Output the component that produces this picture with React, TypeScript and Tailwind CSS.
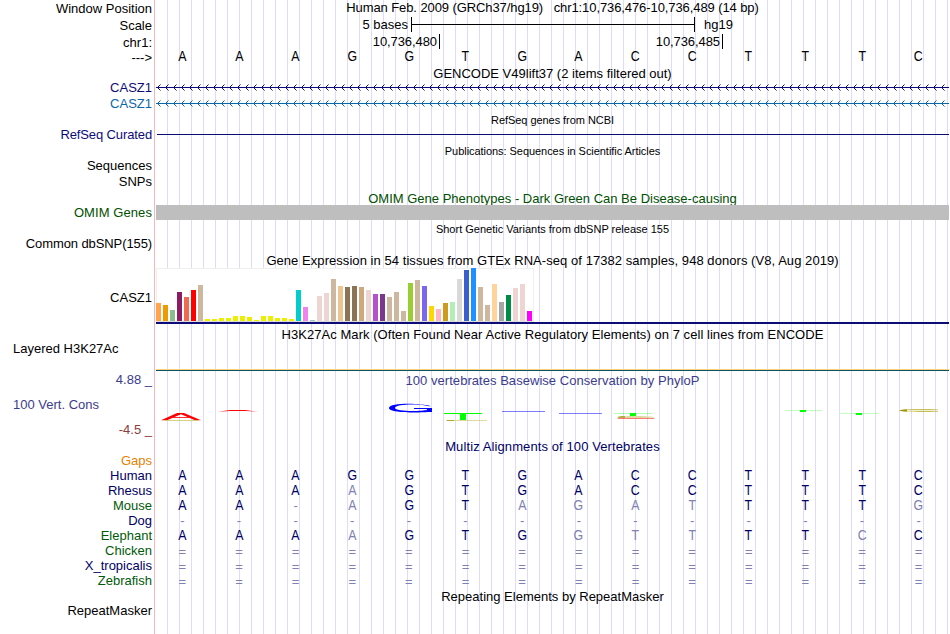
import clsx from "clsx";

interface LabelRow {
  text: string;
  height: string;
  color?: string;
  left?: boolean;
}

// Each height is the distance from the previous baseline
const labels: LabelRow[] = [
  { text: "Window Position", height: "h-4" },
  { text: "Scale", height: "h-[17px]" },
  { text: "chr1:", height: "h-[17px]" },
  { text: "--->", height: "h-[15px]" },
  { text: "CASZ1", height: "h-[30px]", color: "text-[#0c0c78]" },
  { text: "CASZ1", height: "h-4", color: "text-[#0c66aa]" },
  { text: "RefSeq Curated", height: "h-[31px]", color: "text-[#0c0c78] tracking-[-0.12px]" },
  { text: "Sequences", height: "h-[31px]" },
  { text: "SNPs", height: "h-4" },
  { text: "OMIM Genes", height: "h-[31px]", color: "text-[#005000] tracking-[0.08px]" },
  { text: "Common dbSNP(155)", height: "h-[31px] tracking-[-0.1px]" },
  { text: "CASZ1", height: "h-[54px]" },
  { text: "Layered H3K27Ac", height: "h-[51px]", left: true },
  { text: "4.88 _", height: "h-[31px]", color: "text-[#3c3c8c]" },
  { text: "100 Vert. Cons", height: "h-[25px]", color: "text-[#3c3c8c]", left: true },
  { text: "-4.5 _", height: "h-[25px]", color: "text-[#8c3c3c]" },
  { text: "Gaps", height: "h-[31px]", color: "text-[#e68200]" },
  { text: "Human", height: "h-[15px]", color: "text-[#000064]" },
  { text: "Rhesus", height: "h-[15px]", color: "text-[#000064]" },
  { text: "Mouse", height: "h-[15px]", color: "text-[#005a0a]" },
  { text: "Dog", height: "h-[15px]", color: "text-[#000064]" },
  { text: "Elephant", height: "h-[15px]", color: "text-[#005a0a]" },
  { text: "Chicken", height: "h-[15px]", color: "text-[#005a0a]" },
  { text: "X_tropicalis", height: "h-[15px]", color: "text-[#000064]" },
  { text: "Zebrafish", height: "h-[15px]", color: "text-[#005a0a]" },
  { text: "RepeatMasker", height: "h-[30px]" },
];

const sequence = "AAAGGTGACCTTTC";

// Lower case marks a base that differs from the human one
const alignments = [
  "AAAGGTGACCTTTC",
  "AAAaGTGACCTTTC",
  "AA-aGTagatTTTg",
  "--------------",
  "AAAaGTGgttTTcC",
  "==============",
  "==============",
  "==============",
];

const expression: [number, string][] = [
  [18, "#ffa54f"], [16, "#ee9a00"], [11, "#8fbc8f"], [29, "#8b1c62"], [24, "#ee6a50"],
  [31, "#ff0000"], [36, "#cdb79e"], [2, "#eeee00"], [2, "#eeee00"], [3, "#eeee00"],
  [3, "#eeee00"], [5, "#eeee00"], [5, "#eeee00"], [4, "#eeee00"], [1, "#eeee00"],
  [5, "#eeee00"], [5, "#eeee00"], [3, "#eeee00"], [3, "#eeee00"], [2, "#eeee00"],
  [31, "#00cdcd"], [14, "#ee82ee"], [1, "#9ac0cd"], [25, "#eed5d2"], [28, "#eed5d2"],
  [42, "#cdb79e"], [35, "#eec591"], [34, "#8b7355"], [35, "#8b7355"], [34, "#cdaa7d"],
  [31, "#eed5d2"], [27, "#b452cd"], [27, "#7a378b"], [24, "#cdb79e"], [29, "#cdb79e"],
  [10, "#cdb79e"], [38, "#9acd32"], [41, "#cdb79e"], [35, "#7a67ee"], [15, "#ffd700"],
  [12, "#ffb6c1"], [18, "#cd9b1d"], [19, "#b4eeb4"], [42, "#d9d9d9"], [51, "#3a5fcd"],
  [53, "#1e90ff"], [34, "#cdb79e"], [16, "#cdb79e"], [37, "#ffd39b"], [19, "#a6a6a6"],
  [26, "#008b45"], [33, "#eed5d2"], [37, "#eed5d2"], [10, "#ff00ff"],
];

function Title({ text, className }: { text: string; className: string }) {
  return (
    <div className={clsx("flex shrink-0 items-end justify-center", className)}>
      <span>{text}</span>
    </div>
  );
}

function BaseRow({ bases }: { bases: string }) {
  return (
    <div className="-ml-0.5 mr-0.5 flex h-[15px] shrink-0 items-end">
      {bases.split("").map((base, i) => (
        <span
          key={i}
          className={clsx(
            "flex-1 text-center",
            /[a-z=-]/.test(base) && "text-[#8080b2]",
            base === "=" && "translate-y-px",
            /[a-z]/i.test(base) && "origin-[50%_12px] scale-x-95 scale-y-110"
          )}
        >
          {base.toUpperCase()}
        </span>
      ))}
    </div>
  );
}

function GeneLine({ color }: { color: string }) {
  const chevrons = Array.from({ length: 99 }, (_, i) => i * 8 + 1);
  return (
    <svg className="block h-[7px] w-full shrink-0" shapeRendering="crispEdges" fill={color}>
      <rect x="0" y="3" width="793" height="1" />
      {chevrons.map((x) => (
        <g key={x}>
          <path d={`M${x + 1} 2h1v1h-1zM${x + 2} 1h1v1h-1zM${x + 1} 4h1v1h-1zM${x + 2} 5h1v1h-1z`} />
          <path d={`M${x + 3} 0h1v1h-1zM${x + 3} 6h1v1h-1z`} opacity="0.5" />
        </g>
      ))}
    </svg>
  );
}

function ExpressionGraph() {
  return (
    <div className="h-[54px] w-[378px] shrink-0 border border-b-[#dcdcdc] border-[#f0f0f0] bg-white">
      <div className="-ml-px -mt-px flex h-[53px] items-end gap-0.5">
        {expression.map(([height, color], i) => (
          <div key={i} className="w-[5px] shrink-0" style={{ height, backgroundColor: color }} />
        ))}
      </div>
    </div>
  );
}

// Squashed base letters whose height follows the conservation score
function ConservationLogo() {
  return (
    <svg className="block h-[30px] w-full shrink-0" viewBox="0 0 793 30">
      {/* A */}
      <path d="M5 21.2L21 14H28L45 21.2H39L25 15.300L11 21.2z" fill="#f00" />
      <path d="M17 18.2H33V19H17z" fill="#f00" />
      <path d="M9 21H42V22H9z" fill="#c8c864" opacity="0.8" />
      {/* A */}
      <path d="M62 12.700L74 11H89L102 12.700L89 11.900H74z" fill="#f00" />
      {/* G */}
      <path
        d="M276 7.300C270 4.300 233 3.200 233 9C233 14.200 268 13.300 272 11.500H276V13H272C262 13.800 233 14.200 233 9C233 3.200 270 4.300 276 7.300zM271 6.900C263 4.800 239 5 239 9C239 12.700 266 12.500 271 10.700V9.900H258V9H276V13H272V11.500C262 13.700 233 14.200 233 9C233 3.600 264 3.900 275 7.200z"
        fill="#00f"
      />
      {/* T over C */}
      <path d="M288 14H326V15H288zM304 15H310V21H304z" fill="#0f0" />
      <path d="M290 21H331V22H290z" fill="#c8c364" opacity="0.6" />
      <path d="M291 21H298V22H291z" fill="#b4aa28" />
      {/* G */}
      <path d="M346 12H389V13H346zM403 14H446V15H403z" fill="#2828ff" opacity="0.6" />
      {/* T over C and A */}
      <path d="M458 14H496V15H458z" fill="#0f0" opacity="0.3" />
      <path d="M474 14H480V17H474z" fill="#0f0" />
      <path d="M461 18.200C465 16.600 491 16.600 500 18.200C491 19.500 465 19.500 461 18.200z" fill="#dcd7a0" />
      <path d="M461 18.200C465 16.800 468 17 469 17.200V19C467 19 463 19 461 18.200z" fill="#b4aa3c" />
      <path d="M462 19H498V20H462z" fill="#f00" opacity="0.5" />
      {/* T */}
      <path d="M629 11H666V12H629zM684 14H722V15H684z" fill="#0f0" opacity="0.25" />
      <path d="M644 11H650V13H644zM700 14H706V16H700z" fill="#0f0" />
      {/* C */}
      <path d="M743 11.500C748 9.800 770 9.900 782 10.500V11.200H751V12H782V12.700C770 13.100 748 13.200 743 11.500z" fill="#aaa000" opacity="0.65" />
      <path d="M743 11.500C746 10.700 748 10.500 751 10.500V12.500C748 12.500 746 12.300 743 11.500z" fill="#a09600" />
    </svg>
  );
}

export default function App() {
  return (
    <div className="flex h-[634px] w-[950px] overflow-hidden whitespace-pre bg-white font-['Liberation_Sans',Arial,sans-serif] text-[13px] leading-[15px] text-black">
      <div className="flex w-[154px] shrink-0 flex-col">
        {labels.map((label, i) => (
          <div
            key={i}
            className={clsx(
              "flex shrink-0 items-end",
              label.left ? "pl-[13px]" : "justify-end pr-0.5",
              label.height,
              label.color
            )}
          >
            {label.text}
          </div>
        ))}
      </div>
      <div className="mr-px w-px shrink-0 bg-[#ffb4b4]" />

      <div className="flex w-[793px] shrink-0 flex-col bg-[repeating-linear-gradient(to_right,transparent_0px,transparent_11px,#dcdcff_11px,#dcdcff_12px)]">
        <Title
          className="h-[15px] tracking-[-0.09px]"
          text="Human Feb. 2009 (GRCh37/hg19)   chr1:10,736,476-10,736,489 (14 bp)"
        />

        {/* Scale bar */}
        <div className="flex h-[18px] shrink-0 items-center pl-[206px]">
          <span className="w-[46px] text-right">5 bases</span>
          <div className="ml-[3px] flex h-[15px] w-[284px] items-center border-x border-black">
            <div className="h-px w-full bg-black" />
          </div>
          <span className="ml-[9px]">hg19</span>
        </div>

        {/* Coordinates */}
        <div className="flex h-4 shrink-0 items-end tracking-[-0.08px]">
          <div className="flex w-[284px] justify-end border-r border-black pr-0.5">10,736,480</div>
          <div className="flex w-[283px] justify-end border-r border-black pr-0.5">10,736,485</div>
        </div>

        <BaseRow bases={sequence} />
        <Title className="h-[17px]" text="GENCODE V49lift37 (2 items filtered out)" />
        <div className="flex shrink-0 flex-col gap-[9px] pt-[3px]">
          <GeneLine color="#0c0c78" />
          <GeneLine color="#0c66aa" />
        </div>

        <Title className="h-[21px] text-[11px] tracking-[-0.05px]" text="RefSeq genes from NCBI" />
        <div className="ml-px mt-1.5 h-px shrink-0 bg-[#0c0c78]" />
        <Title
          className="h-[24px] text-[11px] tracking-[-0.05px]"
          text="Publications: Sequences in Scientific Articles"
        />
        <Title
          className="h-[47px] text-[#005000]"
          text="OMIM Gene Phenotypes - Dark Green Can Be Disease-causing"
        />
        <div className="-mt-px h-[15px] shrink-0 bg-[#bebebe]" />
        <Title className="h-[17px] text-[11px]" text="Short Genetic Variants from dbSNP release 155" />

        <Title
          className="h-[31px] tracking-[0.055px]"
          text="Gene Expression in 54 tissues from GTEx RNA-seq of 17382 samples, 948 donors (V8, Aug 2019)"
        />
        <ExpressionGraph />
        <div className="h-0.5 shrink-0 bg-[#0c0c78]" />

        <Title
          className="h-[18px] tracking-[0.05px]"
          text="H3K27Ac Mark (Often Found Near Active Regulatory Elements) on 7 cell lines from ENCODE"
        />
        <div className="mt-[27px] h-px shrink-0 bg-[#ffd278]" />
        <div className="h-px shrink-0 bg-[#0c505f]" />

        <Title
          className="h-[17px] tracking-[0.04px] text-[#3c3c8c]"
          text="100 vertebrates Basewise Conservation by PhyloP"
        />
        <div className="mt-[11px] shrink-0">
          <ConservationLogo />
        </div>

        <Title
          className="mt-2.5 h-[15px] tracking-[0.1px] text-[#000064]"
          text="Multiz Alignments of 100 Vertebrates"
        />
        <div className="mt-[14px] shrink-0 text-[#000064]">
          {alignments.map((bases, i) => (
            <BaseRow key={i} bases={bases} />
          ))}
        </div>
        <Title className="h-4" text="Repeating Elements by RepeatMasker" />
      </div>
    </div>
  );
}
